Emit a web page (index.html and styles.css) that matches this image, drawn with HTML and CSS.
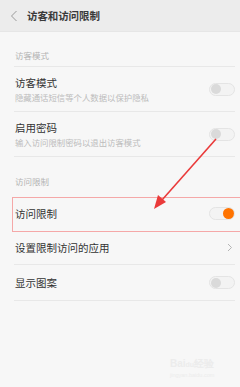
FILE: index.html
```html
<!DOCTYPE html>
<html lang="zh">
<head>
<meta charset="utf-8">
<link rel="stylesheet" href="styles.css">
</head>
<body>
<div class="screen">
  <header class="topbar">
    <svg class="back" width="8" height="12" viewBox="0 0 8 12"><path d="M6.5 1 L1.5 6 L6.5 11" fill="none" stroke="#9a9a9a" stroke-width="1"/></svg>
    <span class="title">访客和访问限制</span>
  </header>

  <div class="section-label first">访客模式</div>
  <div class="row two">
    <div class="texts">
      <div class="main">访客模式</div>
      <div class="sub">隐藏通话短信等个人数据以保护隐私</div>
    </div>
    <span class="toggle"><span class="knob"></span></span>
  </div>
  <div class="row two">
    <div class="texts">
      <div class="main">启用密码</div>
      <div class="sub">输入访问限制密码以退出访客模式</div>
    </div>
    <span class="toggle"><span class="knob"></span></span>
  </div>

  <div class="section-label second">访问限制</div>
  <div class="row one r1">
    <div class="main">访问限制</div>
    <span class="toggle on"><span class="knob"></span></span>
  </div>
  <div class="row one r2">
    <div class="main">设置限制访问的应用</div>
    <svg class="chev" width="6" height="9" viewBox="0 0 6 9"><path d="M1 1 L4.5 4.5 L1 8" fill="none" stroke="#b5b5b5" stroke-width="1"/></svg>
  </div>
  <div class="row one r3">
    <div class="main">显示图案</div>
    <span class="toggle"><span class="knob"></span></span>
  </div>

  <div class="highlight"></div>
  <svg class="arrow" width="240" height="387" viewBox="0 0 240 387">
    <line x1="216" y1="139" x2="162" y2="200" stroke="#ea3a3a" stroke-width="1.6"/>
    <polygon points="154,209 158,195 166,202" fill="#ea3a3a"/>
  </svg>

  <div class="watermark">
    <div class="wm-logo">Bai<span class="paw">du</span>经验</div>
    <div class="wm-url">jingyan.baidu.com</div>
  </div>
</div>
</body>
</html>
```
FILE: styles.css
```css
* { box-sizing: border-box; }
html, body { margin: 0; padding: 0; }
body {
  background: #f7f7f7;
  font-family: "Noto Sans CJK SC", "Noto Sans", sans-serif;
  color: #333;
}
.screen {
  position: relative;
  width: 240px;
  height: 387px;
  overflow: hidden;
  background: #f7f7f7;
}
.topbar {
  height: 32px;
  background: #ececec;
  display: flex;
  align-items: center;
  padding-left: 10px;
  border-bottom: 1px solid #e6e6e6;
}
.back { margin-right: 9px; }
.title {
  font-size: 10.5px;
  font-weight: 700;
  color: #3a3a3a;
  letter-spacing: -0.1px;
}
.section-label {
  font-size: 8.5px;
  color: #b3b3b3;
  padding-left: 15px;
  display: flex;
  align-items: flex-end;
  line-height: 12px;
}
.section-label.first {
  height: 35px;
  padding-bottom: 5px;
  margin-left: 14px;
  padding-left: 1px;
  margin-right: 5px;
  border-bottom: 1px solid #e8e8e8;
}
.section-label.second {
  height: 39px;
  padding-bottom: 9px;
}
.row {
  display: flex;
  align-items: center;
  justify-content: space-between;
  margin-left: 14px;
  margin-right: 5px;
  padding-left: 1px;
  border-bottom: 1px solid #e8e8e8;
}
.row.two { height: 45px; }
.row.one { height: 35px; }
.row.r1 { border-bottom: none; }
.row.r2 { height: 34px; }
.row.r3 { height: 36px; }
.texts { display: flex; flex-direction: column; }
.main {
  font-size: 10.5px;
  line-height: 14px;
  color: #333;
}
.sub {
  font-size: 8.4px;
  line-height: 11px;
  color: #bcbcbc;
  margin-top: 2px;
}
.toggle {
  width: 26px;
  height: 13px;
  border-radius: 7px;
  border: 1px solid #e4e4e4;
  background: #f3f3f3;
  position: relative;
  display: block;
}
.knob {
  position: absolute;
  left: 1px;
  top: 0.5px;
  width: 10px;
  height: 10px;
  border-radius: 50%;
  background: #dadada;
}
.toggle.on .knob {
  left: auto;
  right: 0px;
  top: 0px;
  width: 11px;
  height: 11px;
  background: #ff7300;
}
.chev { margin-right: 2px; }
.highlight {
  position: absolute;
  left: 12px;
  top: 197px;
  width: 232px;
  height: 35px;
  border: 1.5px solid #f5a8a8;
}
.arrow { position: absolute; left: 0; top: 0; }
.watermark {
  position: absolute;
  left: 170px;
  top: 358px;
  color: #ececec;
  font-family: "Liberation Sans", sans-serif;
}
.wm-logo { font-size: 10px; font-weight: 700; line-height: 12px; }
.paw { font-size: 7px; }
.wm-url { font-size: 5.5px; line-height: 8px; }
```
